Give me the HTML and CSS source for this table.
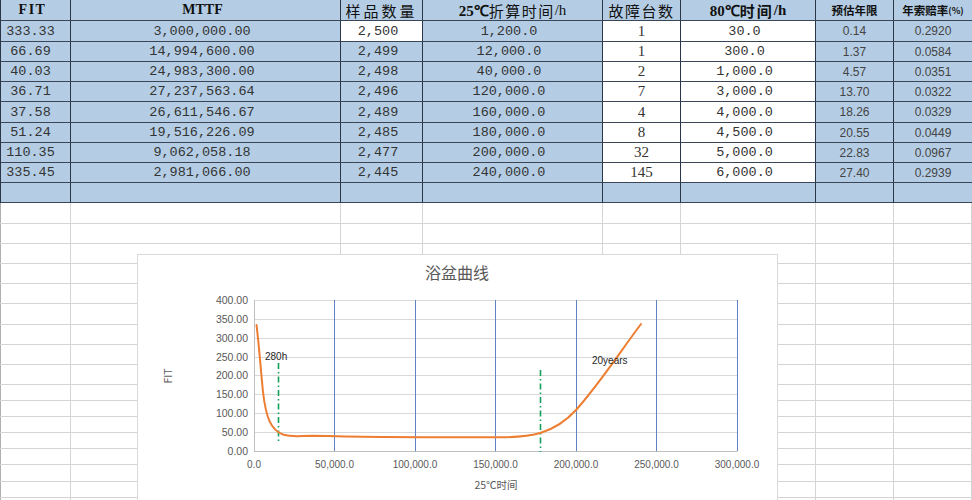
FILE: index.html
```html
<!DOCTYPE html>
<html lang="zh">
<head>
<meta charset="utf-8">
<title>浴盆曲线</title>
<link rel="stylesheet" href="styles.css">
</head>
<body>
<div class="sheet">
  <div class="table">
    <div class="row r21 head">
      <div class="c fit-h">FIT</div>
      <div class="c mttf-h">MTTF</div>
      <div class="c cjk-h">样品数量</div>
      <div class="c"><b class="serif-b">25℃</b><span class="cjk-h tight">折算时间</span><span class="serif">/h</span></div>
      <div class="c cjk-h tight white-h">故障台数</div>
      <div class="c"><b class="serif-b">80℃</b><span class="cjk-h tight bold">时间</span><b class="serif-b">/h</b></div>
      <div class="c small-h">预估年限</div>
      <div class="c small-h">年索赔率<span class="pct">(%)</span></div>
    </div>
    <div class="row r21">
      <div class="c mono fit">333.33</div><div class="c mono">3,000,000.00</div><div class="c mono w">2,500</div><div class="c mono">1,200.0</div><div class="c serif w">1</div><div class="c mono w">30.0</div><div class="c sm">0.14</div><div class="c sm">0.2920</div>
    </div>
    <div class="row">
      <div class="c mono fit">66.69</div><div class="c mono">14,994,600.00</div><div class="c mono">2,499</div><div class="c mono">12,000.0</div><div class="c serif w">1</div><div class="c mono w">300.0</div><div class="c sm">1.37</div><div class="c sm">0.0584</div>
    </div>
    <div class="row">
      <div class="c mono fit">40.03</div><div class="c mono">24,983,300.00</div><div class="c mono">2,498</div><div class="c mono">40,000.0</div><div class="c serif w">2</div><div class="c mono w">1,000.0</div><div class="c sm">4.57</div><div class="c sm">0.0351</div>
    </div>
    <div class="row">
      <div class="c mono fit">36.71</div><div class="c mono">27,237,563.64</div><div class="c mono">2,496</div><div class="c mono">120,000.0</div><div class="c serif w">7</div><div class="c mono w">3,000.0</div><div class="c sm">13.70</div><div class="c sm">0.0322</div>
    </div>
    <div class="row r21">
      <div class="c mono fit">37.58</div><div class="c mono">26,611,546.67</div><div class="c mono">2,489</div><div class="c mono">160,000.0</div><div class="c serif w">4</div><div class="c mono w">4,000.0</div><div class="c sm">18.26</div><div class="c sm">0.0329</div>
    </div>
    <div class="row">
      <div class="c mono fit">51.24</div><div class="c mono">19,516,226.09</div><div class="c mono">2,485</div><div class="c mono">180,000.0</div><div class="c serif w">8</div><div class="c mono w">4,500.0</div><div class="c sm">20.55</div><div class="c sm">0.0449</div>
    </div>
    <div class="row">
      <div class="c mono fit">110.35</div><div class="c mono">9,062,058.18</div><div class="c mono">2,477</div><div class="c mono">200,000.0</div><div class="c serif w">32</div><div class="c mono w">5,000.0</div><div class="c sm">22.83</div><div class="c sm">0.0967</div>
    </div>
    <div class="row">
      <div class="c mono fit">335.45</div><div class="c mono">2,981,066.00</div><div class="c mono">2,445</div><div class="c mono">240,000.0</div><div class="c serif w">145</div><div class="c mono w">6,000.0</div><div class="c sm">27.40</div><div class="c sm">0.2939</div>
    </div>
    <div class="row">
      <div class="c"></div><div class="c"></div><div class="c"></div><div class="c"></div><div class="c"></div><div class="c"></div><div class="c"></div><div class="c"></div>
    </div>
  </div>

  <div class="blank">
    <div class="brow h21"><i></i><i></i><i></i><i></i><i></i><i></i><i></i><i></i></div>
    <div class="brow"><i></i><i></i><i></i><i></i><i></i><i></i><i></i><i></i></div>
    <div class="brow"><i></i><i></i><i></i><i></i><i></i><i></i><i></i><i></i></div>
    <div class="brow"><i></i><i></i><i></i><i></i><i></i><i></i><i></i><i></i></div>
    <div class="brow"><i></i><i></i><i></i><i></i><i></i><i></i><i></i><i></i></div>
    <div class="brow h21"><i></i><i></i><i></i><i></i><i></i><i></i><i></i><i></i></div>
    <div class="brow"><i></i><i></i><i></i><i></i><i></i><i></i><i></i><i></i></div>
    <div class="brow"><i></i><i></i><i></i><i></i><i></i><i></i><i></i><i></i></div>
    <div class="brow"><i></i><i></i><i></i><i></i><i></i><i></i><i></i><i></i></div>
    <div class="brow h16"><i></i><i></i><i></i><i></i><i></i><i></i><i></i><i></i></div>
    <div class="brow h16"><i></i><i></i><i></i><i></i><i></i><i></i><i></i><i></i></div>
    <div class="brow h16"><i></i><i></i><i></i><i></i><i></i><i></i><i></i><i></i></div>
    <div class="brow h16"><i></i><i></i><i></i><i></i><i></i><i></i><i></i><i></i></div>
    <div class="brow h16"><i></i><i></i><i></i><i></i><i></i><i></i><i></i><i></i></div>
    <div class="brow h17"><i></i><i></i><i></i><i></i><i></i><i></i><i></i><i></i></div>
    <div class="brow h16"><i></i><i></i><i></i><i></i><i></i><i></i><i></i><i></i></div>
    <div class="brow h16"><i></i><i></i><i></i><i></i><i></i><i></i><i></i><i></i></div>
  </div>

  <div class="chart">
    <svg class="plot" width="641" height="262" viewBox="137 254 641 262" xmlns="http://www.w3.org/2000/svg">
      <text class="title" x="457" y="279" text-anchor="middle">浴盆曲线</text>
      <g class="hgrid">
        <line x1="254" y1="300.5" x2="737" y2="300.5"/>
        <line x1="254" y1="319.5" x2="737" y2="319.5"/>
        <line x1="254" y1="338.5" x2="737" y2="338.5"/>
        <line x1="254" y1="357.5" x2="737" y2="357.5"/>
        <line x1="254" y1="375.5" x2="737" y2="375.5"/>
        <line x1="254" y1="394.5" x2="737" y2="394.5"/>
        <line x1="254" y1="413.5" x2="737" y2="413.5"/>
        <line x1="254" y1="432.5" x2="737" y2="432.5"/>
      </g>
      <line class="axis" x1="254.5" y1="300" x2="254.5" y2="451"/>
      <line class="axis" x1="254" y1="451.5" x2="737.5" y2="451.5"/>
      <g class="vgrid">
        <line x1="334.5" y1="300" x2="334.5" y2="451"/>
        <line x1="415.5" y1="300" x2="415.5" y2="451"/>
        <line x1="495.5" y1="300" x2="495.5" y2="451"/>
        <line x1="576.5" y1="300" x2="576.5" y2="451"/>
        <line x1="656.5" y1="300" x2="656.5" y2="451"/>
        <line x1="737.5" y1="300" x2="737.5" y2="451"/>
      </g>
      <g class="ylab" text-anchor="end">
        <text x="248" y="304">400.00</text>
        <text x="248" y="323">350.00</text>
        <text x="248" y="342">300.00</text>
        <text x="248" y="361">250.00</text>
        <text x="248" y="379">200.00</text>
        <text x="248" y="398">150.00</text>
        <text x="248" y="417">100.00</text>
        <text x="248" y="436">50.00</text>
        <text x="248" y="455">0.00</text>
      </g>
      <g class="xlab" text-anchor="middle">
        <text x="254" y="468">0.0</text>
        <text x="334.5" y="468">50,000.0</text>
        <text x="415" y="468">100,000.0</text>
        <text x="495.5" y="468">150,000.0</text>
        <text x="576" y="468">200,000.0</text>
        <text x="656.5" y="468">250,000.0</text>
        <text x="737" y="468">300,000.0</text>
      </g>
      <text class="axtitle" x="496" y="489" text-anchor="middle">25℃时间</text>
      <text class="axtitle" transform="translate(172 376) rotate(-90)" text-anchor="middle">FIT</text>
      <line class="mark" x1="278.5" y1="363" x2="278.5" y2="443"/>
      <line class="mark" x1="540.5" y1="370" x2="540.5" y2="452"/>
      <path class="curve" d="M256.5,325 C259,345 261,372 263,392 C266,418 271,430 283,434.5 C293,437.5 300,435.8 312,435.8 C340,436.5 420,437.5 500,437.3 C520,437.2 530,436 541,432.7 C556,428 566,421 576,410 C600,383 620,352 641,324"/>
      <text class="lbl" x="265" y="360">280h</text>
      <text class="lbl" x="592" y="364">20years</text>
    </svg>
  </div>
</div>
</body>
</html>
```
FILE: styles.css
```css
html, body {
  margin: 0;
  padding: 0;
  background: #ffffff;
}
body {
  width: 972px;
  height: 500px;
  overflow: hidden;
  font-family: "Liberation Sans", Arial, sans-serif;
}
.sheet {
  position: relative;
  width: 972px;
}
.table {
  display: flex;
  flex-direction: column;
  background: #b4cde4;
  border-left: 1px solid #2a3545;
  box-sizing: border-box;
}
.row {
  display: grid;
  grid-template-columns: 70px 270px 82px 180px 78px 135px 78px 78px;
  height: 20px;
}
.row.r21 { height: 21px; }
.c {
  display: flex;
  align-items: center;
  justify-content: center;
  border-right: 1px solid #2a3545;
  border-bottom: 1px solid #3a4656;
  box-sizing: border-box;
  color: #333333;
  white-space: nowrap;
  overflow: hidden;
}
.c:last-child { border-right: none; }
.c.w { background: #ffffff; }
.head .c { color: #111111; }
.mono {
  font-family: "Liberation Mono", "DejaVu Sans Mono", monospace;
  font-size: 13.5px;
  padding-right: 7px;
}
.mono.fit { padding-right: 10px; }
.serif {
  font-family: "Liberation Serif", "Times New Roman", serif;
  font-size: 15px;
}
.serif-b {
  font-family: "Liberation Serif", "Times New Roman", serif;
  font-size: 15px;
  font-weight: 700;
}
.fit-h {
  font-family: "Liberation Serif", serif;
  font-weight: 700;
  font-size: 14px;
  letter-spacing: 1.5px;
  padding-right: 6px;
}
.mttf-h {
  font-family: "Liberation Serif", serif;
  font-weight: 700;
  font-size: 14px;
  padding-right: 6px;
}
.cjk-h {
  font-family: "Noto Sans CJK SC", sans-serif;
  font-size: 15px;
  letter-spacing: 3px;
  font-weight: 400;
}
.cjk-h.tight { letter-spacing: 1.5px; }
.cjk-h.bold { font-weight: 700; letter-spacing: 2px; }
.small-h {
  font-family: "Noto Sans CJK SC", sans-serif;
  font-size: 11.5px;
  font-weight: 700;
  color: #222222;
}
.pct { font-size: 9px; }
.sm {
  font-family: "Liberation Sans", Arial, sans-serif;
  font-size: 12px;
  color: #444444;
}
.blank {
  display: flex;
  flex-direction: column;
}
.brow {
  display: grid;
  grid-template-columns: 71px 270px 82px 180px 78px 135px 78px 78px;
  height: 20px;
  border-bottom: 1px solid #d4d4d4;
  box-sizing: border-box;
}
.brow.h21 { height: 21px; }
.brow.h16 { height: 16px; }
.brow.h17 { height: 17px; }
.brow i {
  border-right: 1px solid #d4d4d4;
}
.brow i:first-child {
  border-left: 1px solid #b0b0b0;
}
.chart {
  position: absolute;
  left: 137px;
  top: 254px;
  width: 641px;
  height: 262px;
  background: #ffffff;
  border: 1px solid #d9d9d9;
  box-sizing: border-box;
}
.plot {
  display: block;
  margin: -1px 0 0 -1px;
}
.title {
  font-family: "Noto Sans CJK SC", sans-serif;
  font-size: 16px;
  fill: #595959;
}
.hgrid line {
  stroke: #d9d9d9;
  stroke-width: 1;
}
.axis {
  stroke: #bfbfbf;
  stroke-width: 1;
}
.vgrid line {
  stroke: #5e82c4;
  stroke-width: 1;
}
.ylab text {
  font-family: "Liberation Sans", Arial, sans-serif;
  font-size: 10.5px;
  fill: #595959;
}
.xlab text {
  font-family: "Liberation Sans", Arial, sans-serif;
  font-size: 10px;
  fill: #595959;
}
.axtitle {
  font-family: "Noto Sans CJK SC", "Liberation Sans", sans-serif;
  font-size: 10.5px;
  fill: #595959;
}
.mark {
  stroke: #13a05a;
  stroke-width: 1.6;
  stroke-dasharray: 6 3 1.5 3;
}
.curve {
  fill: none;
  stroke: #ed7d31;
  stroke-width: 2;
  stroke-linecap: round;
}
.lbl {
  font-family: "Liberation Sans", Arial, sans-serif;
  font-size: 10px;
  fill: #262626;
}
```
